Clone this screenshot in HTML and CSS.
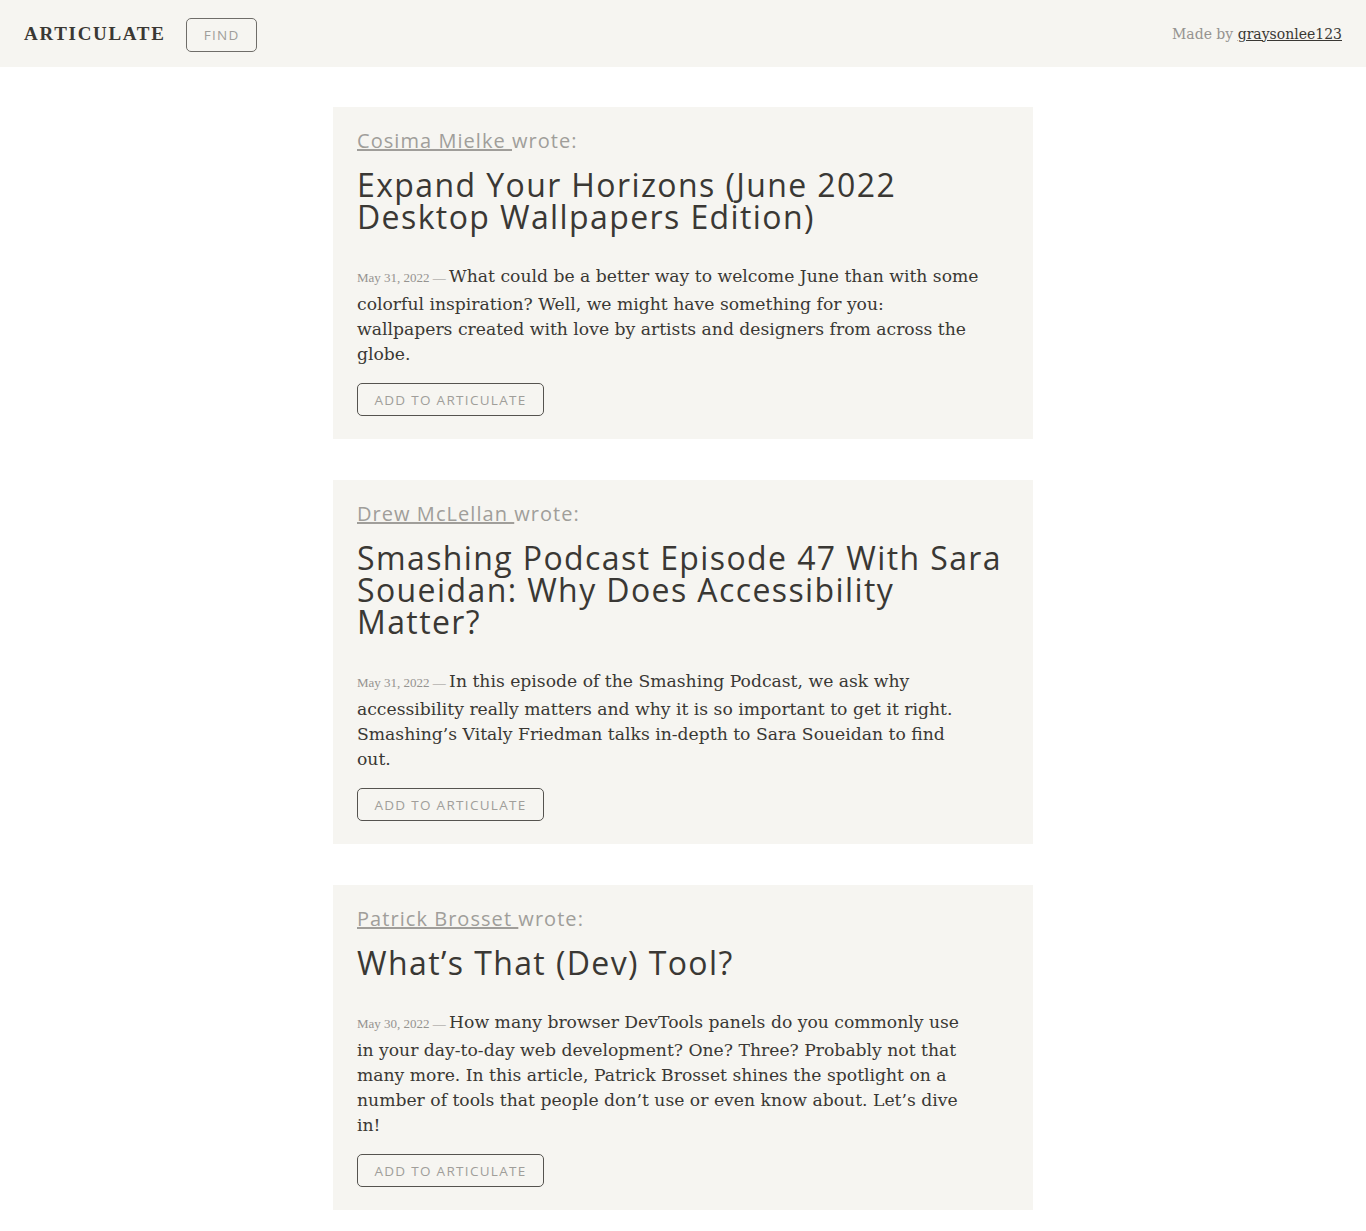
FILE: index.html
```html
<!DOCTYPE html>
<html lang="en">
<head>
<meta charset="utf-8">
<title>Articulate</title>
<link rel="stylesheet" href="styles.css">
</head>
<body>
<header class="topbar">
  <div class="topbar-left">
    <span class="brand">ARTICULATE</span>
    <button class="find-btn">FIND</button>
  </div>
  <div class="credit">Made by <a href="#" class="credit-link">graysonlee123</a></div>
</header>
<main class="feed">
  <article class="card">
    <p class="byline"><a href="#" class="author">Cosima Mielke </a>wrote:</p>
    <h2 class="title">Expand Your Horizons (June 2022 Desktop Wallpapers Edition)</h2>
    <p class="summary"><span class="date">May 31, 2022 — </span>What could be a better way to welcome June than with some colorful inspiration? Well, we might have something for you: wallpapers created with love by artists and designers from across the globe.</p>
    <button class="add-btn">ADD TO ARTICULATE</button>
  </article>
  <article class="card">
    <p class="byline"><a href="#" class="author">Drew McLellan </a>wrote:</p>
    <h2 class="title">Smashing Podcast Episode 47 With Sara Soueidan: Why Does Accessibility Matter?</h2>
    <p class="summary"><span class="date">May 31, 2022 — </span>In this episode of the Smashing Podcast, we ask why accessibility really matters and why it is so important to get it right. Smashing’s Vitaly Friedman talks in-depth to Sara Soueidan to find out.</p>
    <button class="add-btn">ADD TO ARTICULATE</button>
  </article>
  <article class="card">
    <p class="byline"><a href="#" class="author">Patrick Brosset </a>wrote:</p>
    <h2 class="title">What’s That (Dev) Tool?</h2>
    <p class="summary"><span class="date">May 30, 2022 — </span>How many browser DevTools panels do you commonly use in your day-to-day web development? One? Three? Probably not that many more. In this article, Patrick Brosset shines the spotlight on a number of tools that people don’t use or even know about. Let’s dive in!</p>
    <button class="add-btn">ADD TO ARTICULATE</button>
  </article>
</main>
</body>
</html>
```
FILE: styles.css
```css
* { box-sizing: border-box; }
html, body { margin: 0; padding: 0; background: #ffffff; }
body { color: #3a3834; font-family: "DejaVu Serif", serif; }

.topbar {
  display: flex;
  justify-content: space-between;
  align-items: center;
  height: 67px;
  padding: 0 24px;
  background: #f6f5f1;
}
.topbar-left { display: flex; align-items: center; }
.brand {
  font-family: "Liberation Serif", serif;
  font-weight: 700;
  font-size: 19px;
  letter-spacing: 1.7px;
  color: #3a3834;
}
.find-btn {
  margin: 2px 0 0 20px;
  width: 71px;
  height: 34px;
  border: 1.5px solid #6f6d69;
  border-radius: 5px;
  background: transparent;
  font-family: "Open Sans", sans-serif;
  font-size: 13.5px;
  letter-spacing: 1.3px;
  color: #a09e9a;
  padding: 0 0 0 1px;
}
.credit {
  font-family: "DejaVu Serif", serif;
  font-size: 14px;
  color: #959390;
}
.credit-link { color: #3a3834; }

.feed {
  display: flex;
  flex-direction: column;
  align-items: center;
  gap: 41px;
  padding: 40px 0 22px;
}
.card {
  width: 700px;
  padding: 20px 24px 23px;
  background: #f6f5f1;
}
.byline {
  margin: 0;
  font-family: "Open Sans", sans-serif;
  font-size: 20px;
  line-height: 28px;
  letter-spacing: 1.05px;
  color: #a09e9a;
}
.author { color: #a09e9a; }
.title {
  margin: 14px 0 31px;
  font-family: "Open Sans", sans-serif;
  font-weight: 400;
  font-size: 32px;
  line-height: 32px;
  letter-spacing: 1.4px;
  color: #3a3834;
}
.summary {
  margin: 0 0 16px;
  max-width: 622px;
  font-family: "DejaVu Serif", serif;
  font-size: 17.2px;
  line-height: 25px;
  color: #3a3834;
}
.date {
  font-family: "Liberation Serif", serif;
  font-size: 13px;
  line-height: 28px;
  color: #959390;
}
.add-btn {
  width: 187px;
  height: 33px;
  border: 1.5px solid #55534f;
  border-radius: 5px;
  background: transparent;
  font-family: "Open Sans", sans-serif;
  font-size: 13.5px;
  letter-spacing: 1.3px;
  color: #a09e9a;
  padding: 0;
}
```
